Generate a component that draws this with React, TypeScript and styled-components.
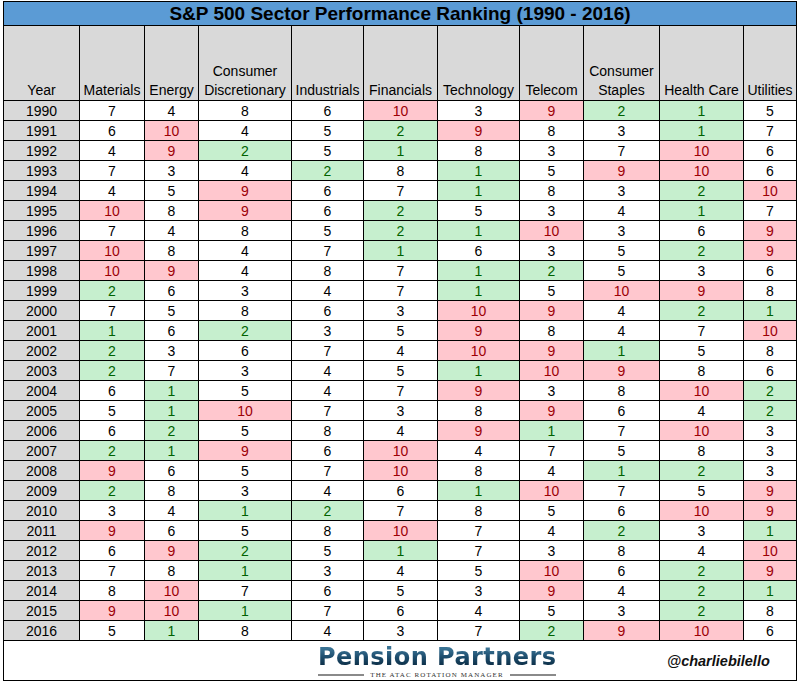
import React from 'react';
import styled, { createGlobalStyle } from 'styled-components';

const GlobalStyle = createGlobalStyle`
  html, body {
    margin: 0;
    padding: 0;
    background: #fff;
  }
  body {
    font-family: 'Liberation Sans', Arial, sans-serif;
    color: #000;
  }
`;

// inner cell widths, grid lines come from the 1px gap
const COLS = [75, 64, 53, 92, 71, 73, 81, 63, 75, 83, 52];

const SECTORS = [
  ['Materials'],
  ['Energy'],
  ['Consumer', 'Discretionary'],
  ['Industrials'],
  ['Financials'],
  ['Technology'],
  ['Telecom'],
  ['Consumer', 'Staples'],
  ['Health Care'],
  ['Utilities'],
];

const RANKS: [number, number[]][] = [
  [1990, [7, 4, 8, 6, 10, 3, 9, 2, 1, 5]],
  [1991, [6, 10, 4, 5, 2, 9, 8, 3, 1, 7]],
  [1992, [4, 9, 2, 5, 1, 8, 3, 7, 10, 6]],
  [1993, [7, 3, 4, 2, 8, 1, 5, 9, 10, 6]],
  [1994, [4, 5, 9, 6, 7, 1, 8, 3, 2, 10]],
  [1995, [10, 8, 9, 6, 2, 5, 3, 4, 1, 7]],
  [1996, [7, 4, 8, 5, 2, 1, 10, 3, 6, 9]],
  [1997, [10, 8, 4, 7, 1, 6, 3, 5, 2, 9]],
  [1998, [10, 9, 4, 8, 7, 1, 2, 5, 3, 6]],
  [1999, [2, 6, 3, 4, 7, 1, 5, 10, 9, 8]],
  [2000, [7, 5, 8, 6, 3, 10, 9, 4, 2, 1]],
  [2001, [1, 6, 2, 3, 5, 9, 8, 4, 7, 10]],
  [2002, [2, 3, 6, 7, 4, 10, 9, 1, 5, 8]],
  [2003, [2, 7, 3, 4, 5, 1, 10, 9, 8, 6]],
  [2004, [6, 1, 5, 4, 7, 9, 3, 8, 10, 2]],
  [2005, [5, 1, 10, 7, 3, 8, 9, 6, 4, 2]],
  [2006, [6, 2, 5, 8, 4, 9, 1, 7, 10, 3]],
  [2007, [2, 1, 9, 6, 10, 4, 7, 5, 8, 3]],
  [2008, [9, 6, 5, 7, 10, 8, 4, 1, 2, 3]],
  [2009, [2, 8, 3, 4, 6, 1, 10, 7, 5, 9]],
  [2010, [3, 4, 1, 2, 7, 8, 5, 6, 10, 9]],
  [2011, [9, 6, 5, 8, 10, 7, 4, 2, 3, 1]],
  [2012, [6, 9, 2, 5, 1, 7, 3, 8, 4, 10]],
  [2013, [7, 8, 1, 3, 4, 5, 10, 6, 2, 9]],
  [2014, [8, 10, 7, 6, 5, 3, 9, 4, 2, 1]],
  [2015, [9, 10, 1, 7, 6, 4, 5, 3, 2, 8]],
  [2016, [5, 1, 8, 4, 3, 7, 2, 9, 10, 6]],
];

type Tone = 'top' | 'bottom' | 'plain';

const toneOf = (rank: number): Tone => (rank <= 2 ? 'top' : rank >= 9 ? 'bottom' : 'plain');

const FILL: Record<Tone, string> = { top: '#c6efce', bottom: '#ffc7ce', plain: '#fff' };
const INK: Record<Tone, string> = { top: '#006100', bottom: '#9c0006', plain: '#000' };

const Sheet = styled.div`
  display: grid;
  grid-template-columns: ${COLS.map((w) => `${w}px`).join(' ')};
  grid-template-rows: 23px 74px repeat(${RANKS.length}, 19px) 39px;
  gap: 1px;
  padding: 1px;
  width: max-content;
  margin: 1px 0 0 3px;
  background: #000;
`;

const Title = styled.div`
  grid-column: 1 / -1;
  display: flex;
  align-items: center;
  justify-content: center;
  background: #5b9bd5;
  font-size: 19px;
  font-weight: 700;
`;

const HeadCell = styled.div`
  display: flex;
  flex-direction: column;
  align-items: center;
  justify-content: flex-end;
  background: #d9d9d9;
  font-size: 14px;
  line-height: 19px;
  white-space: nowrap;
`;

const YearCell = styled.div`
  display: flex;
  align-items: center;
  justify-content: center;
  background: #d9d9d9;
  font-size: 14px;
`;

const RankCell = styled.div<{ $tone: Tone }>`
  display: flex;
  align-items: center;
  justify-content: center;
  background: ${(p) => FILL[p.$tone]};
  color: ${(p) => INK[p.$tone]};
  font-size: 14px;
`;

const Footer = styled.div`
  grid-column: 1 / -1;
  display: flex;
  align-items: center;
  padding-left: 314px;
  background: #fff;
`;

const Logo = styled.div`
  display: flex;
  flex-direction: column;
  align-items: stretch;
  width: 238px;
  margin-top: 1px;
`;

const Brand = styled.div`
  font-family: 'DejaVu Sans', Verdana, sans-serif;
  font-weight: 700;
  font-size: 24px;
  line-height: 28px;
  letter-spacing: 0.45px;
  white-space: nowrap;
  background: linear-gradient(180deg, #3a7394 20%, #1d4d6d 50%, #0e3048 80%);
  -webkit-background-clip: text;
  background-clip: text;
  color: transparent;
`;

const Tagline = styled.div`
  display: flex;
  align-items: center;
  gap: 6px;
  height: 8px;
`;

const Rule = styled.span`
  flex: 1;
  height: 2px;
  background: #8a8a8a;
`;

const TagText = styled.span`
  font-family: 'Liberation Serif', 'Times New Roman', serif;
  font-size: 7px;
  line-height: 8px;
  color: #333;
  letter-spacing: 1.1px;
  white-space: nowrap;
`;

const Handle = styled.div`
  margin-left: 111px;
  font-family: 'Liberation Sans', Arial, sans-serif;
  font-style: italic;
  font-weight: 700;
  font-size: 14.5px;
  color: #111;
`;

export default function App() {
  return (
    <>
      <GlobalStyle />
      <Sheet>
        <Title>S&amp;P 500 Sector Performance Ranking (1990 - 2016)</Title>
        <HeadCell>
          <span>Year</span>
        </HeadCell>
        {SECTORS.map((lines) => (
          <HeadCell key={lines.join(' ')}>
            {lines.map((l) => (
              <span key={l}>{l}</span>
            ))}
          </HeadCell>
        ))}
        {RANKS.map(([year, ranks]) => (
          <React.Fragment key={year}>
            <YearCell>{year}</YearCell>
            {ranks.map((r, i) => (
              <RankCell key={i} $tone={toneOf(r)}>
                {r}
              </RankCell>
            ))}
          </React.Fragment>
        ))}
        <Footer>
          <Logo>
            <Brand>Pension Partners</Brand>
            <Tagline>
              <Rule />
              <TagText>THE ATAC ROTATION MANAGER</TagText>
              <Rule />
            </Tagline>
          </Logo>
          <Handle>@charliebilello</Handle>
        </Footer>
      </Sheet>
    </>
  );
}
